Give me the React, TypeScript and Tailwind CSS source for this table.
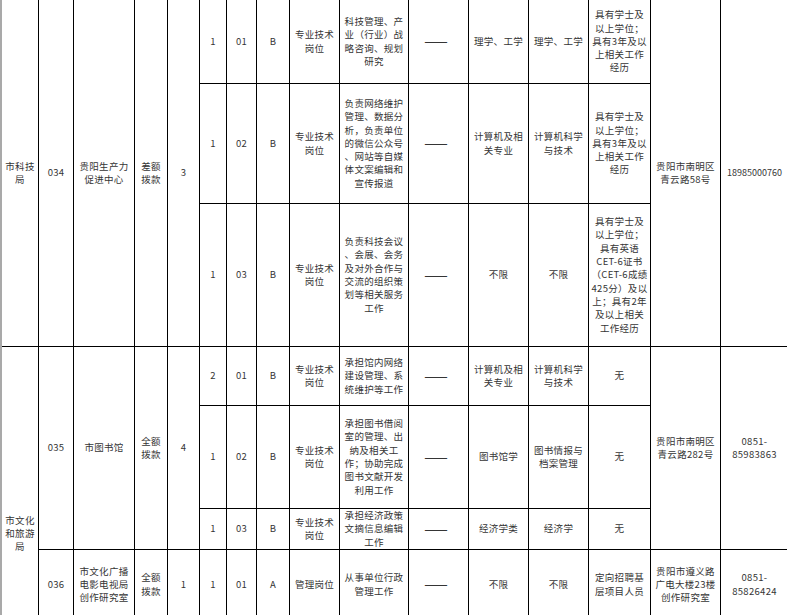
import React from "react";

type CellProps = { cls: string; children?: React.ReactNode };

function Cell({ cls, children }: CellProps) {
  return (
    <div
      className={
        "flex items-center justify-center border-r border-b border-black text-center whitespace-nowrap leading-[13.3px] " +
        cls
      }
    >
      <div>{children}</div>
    </div>
  );
}

function L({ lines }: { lines: string[] }) {
  return (
    <>
      {lines.map((l, i) => (
        <React.Fragment key={i}>
          {i > 0 && <br />}
          {l}
        </React.Fragment>
      ))}
    </>
  );
}

function Dash() {
  return <span className="text-[14px] leading-[14px] tracking-[-1px] mr-[6px]">——</span>;
}

export default function App() {
  return (
    <div className="w-[787px] h-[615px] overflow-hidden bg-white">
      <div className="flex border-l-2 border-[#a9a9a9] h-[760px] w-[789px]">
        <div className="grid grid-cols-[37px_35px_61px_33px_32px_27px_30px_33px_50px_69px_60px_60px_60px_62px_70px_68px] grid-rows-[84px_120px_143px_59px_103px_41px_70px_101px] font-['Noto_Sans_CJK_SC',sans-serif] text-[9.5px] tracking-[0.3px] text-[#353535]">
          {/* Group 034 */}
          <Cell cls="col-start-1 row-start-1 row-span-3"><L lines={["市科技", "局"]} /></Cell>
          <Cell cls="col-start-2 row-start-1 row-span-3">034</Cell>
          <Cell cls="col-start-3 row-start-1 row-span-3"><L lines={["贵阳生产力", "促进中心"]} /></Cell>
          <Cell cls="col-start-4 row-start-1 row-span-3"><L lines={["差额", "拨款"]} /></Cell>
          <Cell cls="col-start-5 row-start-1 row-span-3">3</Cell>

          <Cell cls="col-start-6 row-start-1">1</Cell>
          <Cell cls="col-start-7 row-start-1">01</Cell>
          <Cell cls="col-start-8 row-start-1">B</Cell>
          <Cell cls="col-start-9 row-start-1"><L lines={["专业技术", "岗位"]} /></Cell>
          <Cell cls="col-start-10 row-start-1"><L lines={["科技管理、产", "业（行业）战", "略咨询、规划", "研究"]} /></Cell>
          <Cell cls="col-start-11 row-start-1"><Dash /></Cell>
          <Cell cls="col-start-12 row-start-1">理学、工学</Cell>
          <Cell cls="col-start-13 row-start-1">理学、工学</Cell>
          <Cell cls="col-start-14 row-start-1"><L lines={["具有学士及", "以上学位；", "具有3年及以", "上相关工作", "经历"]} /></Cell>

          <Cell cls="col-start-6 row-start-2">1</Cell>
          <Cell cls="col-start-7 row-start-2">02</Cell>
          <Cell cls="col-start-8 row-start-2">B</Cell>
          <Cell cls="col-start-9 row-start-2"><L lines={["专业技术", "岗位"]} /></Cell>
          <Cell cls="col-start-10 row-start-2"><L lines={["负责网络维护", "管理、数据分", "析，负责单位", "的微信公众号", "、网站等自媒", "体文案编辑和", "宣传报道"]} /></Cell>
          <Cell cls="col-start-11 row-start-2"><Dash /></Cell>
          <Cell cls="col-start-12 row-start-2"><L lines={["计算机及相", "关专业"]} /></Cell>
          <Cell cls="col-start-13 row-start-2"><L lines={["计算机科学", "与技术"]} /></Cell>
          <Cell cls="col-start-14 row-start-2"><L lines={["具有学士及", "以上学位；", "具有3年及以", "上相关工作", "经历"]} /></Cell>

          <Cell cls="col-start-6 row-start-3">1</Cell>
          <Cell cls="col-start-7 row-start-3">03</Cell>
          <Cell cls="col-start-8 row-start-3">B</Cell>
          <Cell cls="col-start-9 row-start-3"><L lines={["专业技术", "岗位"]} /></Cell>
          <Cell cls="col-start-10 row-start-3"><L lines={["负责科技会议", "、会展、会务", "及对外合作与", "交流的组织策", "划等相关服务", "工作"]} /></Cell>
          <Cell cls="col-start-11 row-start-3"><Dash /></Cell>
          <Cell cls="col-start-12 row-start-3">不限</Cell>
          <Cell cls="col-start-13 row-start-3">不限</Cell>
          <Cell cls="col-start-14 row-start-3"><L lines={["具有学士及", "以上学位；", "具有英语", "CET-6证书", "（CET-6成绩", "425分）及以", "上；具有2年", "及以上相关", "工作经历"]} /></Cell>

          <Cell cls="col-start-15 row-start-1 row-span-3"><L lines={["贵阳市南明区", "青云路58号"]} /></Cell>
          <Cell cls="col-start-16 row-start-1 row-span-3 tracking-[0px] text-[9px]">18985000760</Cell>

          {/* Group 035 */}
          <Cell cls="col-start-1 row-start-4 row-span-5"><L lines={["市文化", "和旅游", "局"]} /></Cell>
          <Cell cls="col-start-2 row-start-4 row-span-3">035</Cell>
          <Cell cls="col-start-3 row-start-4 row-span-3">市图书馆</Cell>
          <Cell cls="col-start-4 row-start-4 row-span-3"><L lines={["全额", "拨款"]} /></Cell>
          <Cell cls="col-start-5 row-start-4 row-span-3">4</Cell>

          <Cell cls="col-start-6 row-start-4">2</Cell>
          <Cell cls="col-start-7 row-start-4">01</Cell>
          <Cell cls="col-start-8 row-start-4">B</Cell>
          <Cell cls="col-start-9 row-start-4"><L lines={["专业技术", "岗位"]} /></Cell>
          <Cell cls="col-start-10 row-start-4"><L lines={["承担馆内网络", "建设管理、系", "统维护等工作"]} /></Cell>
          <Cell cls="col-start-11 row-start-4"><Dash /></Cell>
          <Cell cls="col-start-12 row-start-4"><L lines={["计算机及相", "关专业"]} /></Cell>
          <Cell cls="col-start-13 row-start-4"><L lines={["计算机科学", "与技术"]} /></Cell>
          <Cell cls="col-start-14 row-start-4">无</Cell>

          <Cell cls="col-start-6 row-start-5">1</Cell>
          <Cell cls="col-start-7 row-start-5">02</Cell>
          <Cell cls="col-start-8 row-start-5">B</Cell>
          <Cell cls="col-start-9 row-start-5"><L lines={["专业技术", "岗位"]} /></Cell>
          <Cell cls="col-start-10 row-start-5"><L lines={["承担图书借阅", "室的管理、出", "纳及相关工", "作；协助完成", "图书文献开发", "利用工作"]} /></Cell>
          <Cell cls="col-start-11 row-start-5"><Dash /></Cell>
          <Cell cls="col-start-12 row-start-5">图书馆学</Cell>
          <Cell cls="col-start-13 row-start-5"><L lines={["图书情报与", "档案管理"]} /></Cell>
          <Cell cls="col-start-14 row-start-5">无</Cell>

          <Cell cls="col-start-6 row-start-6">1</Cell>
          <Cell cls="col-start-7 row-start-6">03</Cell>
          <Cell cls="col-start-8 row-start-6">B</Cell>
          <Cell cls="col-start-9 row-start-6"><L lines={["专业技术", "岗位"]} /></Cell>
          <Cell cls="col-start-10 row-start-6"><L lines={["承担经济政策", "文摘信息编辑", "工作"]} /></Cell>
          <Cell cls="col-start-11 row-start-6"><Dash /></Cell>
          <Cell cls="col-start-12 row-start-6">经济学类</Cell>
          <Cell cls="col-start-13 row-start-6">经济学</Cell>
          <Cell cls="col-start-14 row-start-6">无</Cell>

          <Cell cls="col-start-15 row-start-4 row-span-3"><L lines={["贵阳市南明区", "青云路282号"]} /></Cell>
          <Cell cls="col-start-16 row-start-4 row-span-3"><L lines={["0851-", "85983863"]} /></Cell>

          {/* Group 036 */}
          <Cell cls="col-start-2 row-start-7">036</Cell>
          <Cell cls="col-start-3 row-start-7"><L lines={["市文化广播", "电影电视局", "创作研究室"]} /></Cell>
          <Cell cls="col-start-4 row-start-7"><L lines={["全额", "拨款"]} /></Cell>
          <Cell cls="col-start-5 row-start-7">1</Cell>
          <Cell cls="col-start-6 row-start-7">1</Cell>
          <Cell cls="col-start-7 row-start-7">01</Cell>
          <Cell cls="col-start-8 row-start-7">A</Cell>
          <Cell cls="col-start-9 row-start-7">管理岗位</Cell>
          <Cell cls="col-start-10 row-start-7"><L lines={["从事单位行政", "管理工作"]} /></Cell>
          <Cell cls="col-start-11 row-start-7"><Dash /></Cell>
          <Cell cls="col-start-12 row-start-7">不限</Cell>
          <Cell cls="col-start-13 row-start-7">不限</Cell>
          <Cell cls="col-start-14 row-start-7"><L lines={["定向招聘基", "层项目人员"]} /></Cell>
          <Cell cls="col-start-15 row-start-7"><L lines={["贵阳市遵义路", "广电大楼23楼", "创作研究室"]} /></Cell>
          <Cell cls="col-start-16 row-start-7"><L lines={["0851-", "85826424"]} /></Cell>

          {/* Hidden row below */}
          <Cell cls="col-start-2 row-start-8" />
          <Cell cls="col-start-3 row-start-8" />
          <Cell cls="col-start-4 row-start-8" />
          <Cell cls="col-start-5 row-start-8" />
          <Cell cls="col-start-6 row-start-8" />
          <Cell cls="col-start-7 row-start-8" />
          <Cell cls="col-start-8 row-start-8" />
          <Cell cls="col-start-9 row-start-8" />
          <Cell cls="col-start-10 row-start-8" />
          <Cell cls="col-start-11 row-start-8" />
          <Cell cls="col-start-12 row-start-8" />
          <Cell cls="col-start-13 row-start-8" />
          <Cell cls="col-start-14 row-start-8" />
          <Cell cls="col-start-15 row-start-8" />
          <Cell cls="col-start-16 row-start-8" />
        </div>
      </div>
    </div>
  );
}
